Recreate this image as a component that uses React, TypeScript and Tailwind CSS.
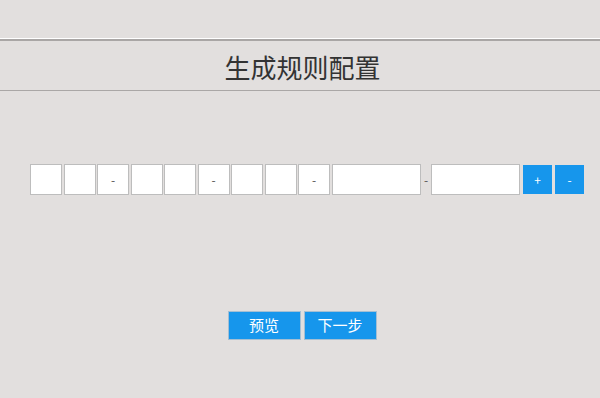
import React from "react";

const font = { fontFamily: '"Microsoft YaHei", "Noto Sans CJK SC", "Liberation Sans", sans-serif' };

function Box({ v, wide }: { v?: string; wide?: boolean }) {
  return (
    <div
      className={`${wide ? "w-[89px]" : "w-[32px]"} h-[31px] bg-white border border-[#bdbdbd] flex items-center justify-center text-[12px] text-[#555] leading-none`}
    >
      {v}
    </div>
  );
}

export default function App() {
  return (
    <div className="w-[600px] h-[398px] bg-[#e2dfde] overflow-hidden" style={font}>
      <div className="h-[38px]" />
      <div className="h-[1px] bg-white" />
      <div className="h-[2px] bg-[#a9a6a5]" />
      <div className="h-[49px] flex items-center justify-center text-[26px] text-[#333] leading-none pt-[2px] pl-[5px]">
        生成规则配置
      </div>
      <div className="h-[1px] bg-[#aaa7a6]" />
      <div className="h-[73px]" />
      <div className="flex items-center pl-[30px] h-[31px]">
        <div className="flex items-center gap-[1.5px]">
          <Box />
          <Box />
          <Box v="-" />
          <Box />
          <Box />
          <Box v="-" />
          <Box />
          <Box />
          <Box v="-" />
        </div>
        <div className="ml-[2px]">
          <Box wide />
        </div>
        <div className="w-[10px] text-center text-[12px] text-[#555]">-</div>
        <Box wide />
        <div className="ml-[3px] w-[29px] h-[29px] bg-[#1696ec] text-white text-[12px] flex items-center justify-center">+</div>
        <div className="ml-[3px] w-[29px] h-[29px] bg-[#1696ec] text-white text-[12px] flex items-center justify-center">-</div>
      </div>
      <div className="h-[116px]" />
      <div className="flex justify-center gap-[3px] pl-[4px]">
        <div className="w-[73px] h-[29px] bg-[#1696ec] border border-[#a5bfd3] text-white text-[15px] flex items-center justify-center">预览</div>
        <div className="w-[73px] h-[29px] bg-[#1696ec] border border-[#a5bfd3] text-white text-[15px] flex items-center justify-center">下一步</div>
      </div>
    </div>
  );
}
